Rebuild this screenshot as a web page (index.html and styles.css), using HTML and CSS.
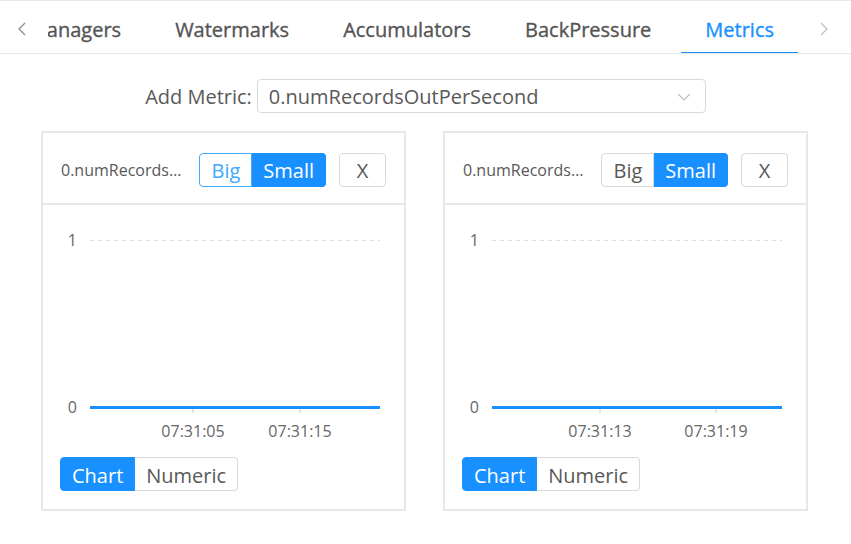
FILE: index.html
```html
<!DOCTYPE html>
<html lang="en">
<head>
<meta charset="utf-8">
<title>Metrics</title>
<link rel="stylesheet" href="styles.css">
</head>
<body>
<div class="tabs">
  <span class="tab-arrow prev"><svg width="10" height="14" viewBox="0 0 10 14"><polyline points="8,1 2,7 8,13" fill="none" stroke="currentColor" stroke-width="1.3"/></svg></span>
  <div class="tab-viewport">
    <div class="tab-list">
      <div class="tab">TaskManagers</div>
      <div class="tab">Watermarks</div>
      <div class="tab">Accumulators</div>
      <div class="tab">BackPressure</div>
      <div class="tab active">Metrics</div>
    </div>
  </div>
  <span class="tab-arrow next"><svg width="10" height="14" viewBox="0 0 10 14"><polyline points="2,1 8,7 2,13" fill="none" stroke="currentColor" stroke-width="1.3"/></svg></span>
</div>

<div class="add-row">
  <label class="add-label">Add Metric:</label>
  <div class="select">
    <span class="select-value">0.numRecordsOutPerSecond</span>
    <svg class="select-arrow" width="14" height="10" viewBox="0 0 14 10"><polyline points="1,2 7,8 13,2" fill="none" stroke="currentColor" stroke-width="1.2"/></svg>
  </div>
</div>

<div class="cards">
  <div class="card">
    <div class="card-head">
      <span class="card-title">0.numRecordsOutPerSecond</span>
      <div class="seg">
        <button class="seg-btn hover">Big</button>
        <button class="seg-btn active">Small</button>
      </div>
      <button class="close-btn">X</button>
    </div>
    <svg class="chart" width="361" height="252" viewBox="0 0 361 252">
      <text class="ylab" x="34" y="41">1</text>
      <line x1="47" y1="35.5" x2="337" y2="35.5" class="grid"/>
      <text class="ylab" x="34" y="208">0</text>
      <line x1="150" y1="204" x2="150" y2="208" class="tick"/>
      <line x1="257" y1="204" x2="257" y2="208" class="tick"/>
      <line x1="47" y1="202.5" x2="337" y2="202.5" class="series"/>
      <text class="xlab" x="150" y="232">07:31:05</text>
      <text class="xlab" x="257" y="232">07:31:15</text>
    </svg>
    <div class="seg mode">
      <button class="seg-btn active">Chart</button>
      <button class="seg-btn">Numeric</button>
    </div>
  </div>

  <div class="card">
    <div class="card-head">
      <span class="card-title">0.numRecordsOutPerSecond</span>
      <div class="seg">
        <button class="seg-btn">Big</button>
        <button class="seg-btn active">Small</button>
      </div>
      <button class="close-btn">X</button>
    </div>
    <svg class="chart" width="361" height="252" viewBox="0 0 361 252">
      <text class="ylab" x="34" y="41">1</text>
      <line x1="47" y1="35.5" x2="337" y2="35.5" class="grid"/>
      <text class="ylab" x="34" y="208">0</text>
      <line x1="155" y1="204" x2="155" y2="208" class="tick"/>
      <line x1="271" y1="204" x2="271" y2="208" class="tick"/>
      <line x1="47" y1="202.5" x2="337" y2="202.5" class="series"/>
      <text class="xlab" x="155" y="232">07:31:13</text>
      <text class="xlab" x="271" y="232">07:31:19</text>
    </svg>
    <div class="seg mode">
      <button class="seg-btn active">Chart</button>
      <button class="seg-btn">Numeric</button>
    </div>
  </div>
</div>
</body>
</html>
```

FILE: styles.css
```css
* { box-sizing: border-box; }

body {
  margin: 0;
  background: #fff;
  font-family: "Open Sans", "Noto Sans", sans-serif;
  color: #595959;
}

/* Tabs */
.tabs {
  display: flex;
  align-items: stretch;
  height: 54px;
  border-top: 1px solid #e8e8e8;
  border-bottom: 1px solid #e8e8e8;
  padding-right: 5px;
}
.tab-arrow {
  width: 44px;
  flex: none;
  display: flex;
  align-items: center;
  justify-content: center;
  padding-top: 4px;
}
.tab-arrow.prev {
  width: 48px;
  justify-content: flex-start;
  padding-left: 17px;
  color: #8c8c8c;
}
.tab-arrow.next { color: #bfbfbf; }
.tab-viewport {
  flex: 1;
  min-width: 0;
  overflow: hidden;
  display: flex;
  justify-content: flex-end;
}
.tab-list {
  flex: none;
  display: flex;
  padding-right: 4px;
  gap: 6px;
}
.tab {
  flex: none;
  padding: 5px 24px 0;
  display: flex;
  align-items: center;
  font-size: 20px;
  color: #545454;
  -webkit-text-stroke: 0.35px currentColor;
  border-bottom: 2px solid transparent;
  margin-bottom: -1px;
  white-space: nowrap;
}
.tab.active {
  color: #1890ff;
  border-bottom-color: #1890ff;
}

/* Add metric row */
.add-row {
  display: flex;
  justify-content: center;
  align-items: center;
  gap: 5px;
  margin-top: 25px;
}
.add-label {
  font-size: 20px;
  color: #595959;
}
.select {
  width: 449px;
  height: 34px;
  border: 1px solid #d9d9d9;
  border-radius: 4px;
  display: flex;
  align-items: center;
  justify-content: space-between;
  padding: 1px 14px 0 11px;
}
.select-value {
  font-size: 20px;
  color: #595959;
}
.select-arrow { color: #bfbfbf; }

/* Cards */
.cards {
  display: flex;
  gap: 37px;
  padding-left: 41px;
  margin-top: 18px;
}
.card {
  width: 365px;
  height: 380px;
  border: 2px solid #e8e8e8;
  display: flex;
  flex-direction: column;
}
.card-head {
  height: 72px;
  border-bottom: 2px solid #e8e8e8;
  display: flex;
  align-items: center;
  padding: 3px 18px 0;
}
.card-title {
  flex: 1;
  min-width: 0;
  overflow: hidden;
  white-space: nowrap;
  text-overflow: ellipsis;
  font-size: 16px;
  color: #595959;
  margin-right: 14px;
}
.seg {
  display: flex;
  height: 34px;
}
.seg-btn {
  font-family: inherit;
  font-size: 20px;
  height: 34px;
  padding: 3px 11px 0;
  background: #fff;
  color: #595959;
  border: 1px solid #d9d9d9;
  line-height: 1;
}
.seg-btn + .seg-btn { border-left-width: 0; }
.seg-btn:first-child { border-radius: 4px 0 0 4px; }
.seg-btn:last-child { border-radius: 0 4px 4px 0; }
.seg-btn.active {
  background: #1890ff;
  border-color: #1890ff;
  color: #fff;
}
.seg-btn.hover {
  border-color: #40a9ff;
  color: #40a9ff;
}
.close-btn {
  font-family: inherit;
  font-size: 20px;
  width: 47px;
  height: 34px;
  margin-left: 13px;
  padding-top: 3px;
  background: #fff;
  color: #595959;
  border: 1px solid #d9d9d9;
  border-radius: 4px;
  line-height: 1;
}

.chart { display: block; }
.chart text { font-family: "Open Sans", "Noto Sans", sans-serif; font-size: 16px; fill: #666; }
.chart .ylab { text-anchor: end; }
.chart .xlab { text-anchor: middle; }
.chart .grid { stroke: #e0e0e0; stroke-width: 1; stroke-dasharray: 4 4; }
.chart .tick { stroke: #ccc; stroke-width: 1; }
.chart .series { stroke: #1890ff; stroke-width: 3; }

.mode { margin-left: 17px; }
```
